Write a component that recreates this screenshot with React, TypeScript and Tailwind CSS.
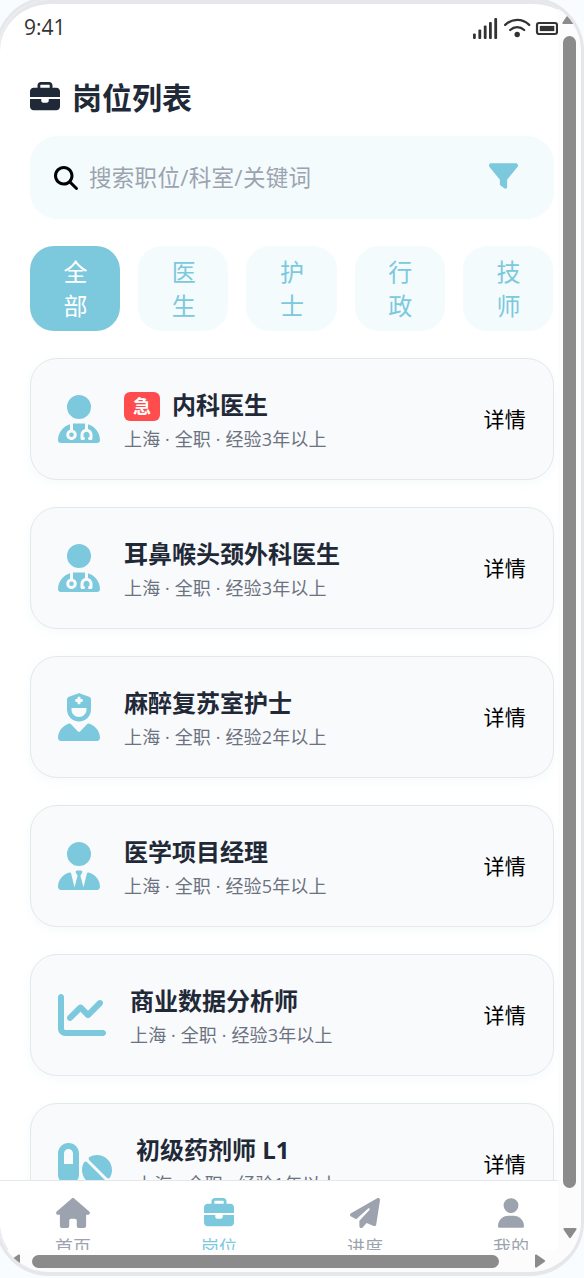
import {
  FaBriefcase,
  FaMagnifyingGlass,
  FaFilter,
  FaUserDoctor,
  FaUserNurse,
  FaUserTie,
  FaChartLine,
  FaPills,
  FaHouse,
  FaPaperPlane,
  FaUser,
} from "react-icons/fa6";
import type { IconType } from "react-icons";

type Job = { icon: IconType; width: string; title: string; years: number; urgent?: boolean };

const jobs: Job[] = [
  { icon: FaUserDoctor, width: "w-[42px]", title: "内科医生", years: 3, urgent: true },
  { icon: FaUserDoctor, width: "w-[42px]", title: "耳鼻喉头颈外科医生", years: 3 },
  { icon: FaUserNurse, width: "w-[42px]", title: "麻醉复苏室护士", years: 2 },
  { icon: FaUserTie, width: "w-[42px]", title: "医学项目经理", years: 5 },
  { icon: FaChartLine, width: "w-[48px]", title: "商业数据分析师", years: 3 },
  { icon: FaPills, width: "w-[54px]", title: "初级药剂师 L1", years: 1 },
];

const tabs = ["全部", "医生", "护士", "行政", "技师"];

const navItems: { icon: IconType; width: string; label: string; active?: boolean }[] = [
  { icon: FaHouse, width: "w-[34px]", label: "首页" },
  { icon: FaBriefcase, width: "w-[30px]", label: "岗位", active: true },
  { icon: FaPaperPlane, width: "w-[30px]", label: "进度" },
  { icon: FaUser, width: "w-[26px]", label: "我的" },
];

function StatusBar() {
  return (
    <div className="flex h-[48px] w-[558px] shrink-0 items-center justify-between pl-[24px] text-[#333]">
      <span className="-mt-[2px] text-[21px] leading-[31px]">9:41</span>
      <div className="flex items-center">
        <svg className="h-[24px] w-[28px]" viewBox="0 0 28 24" fill="currentColor">
          <rect x="1" y="17.5" width="2.8" height="5.5" rx="1" />
          <rect x="6.4" y="13.500" width="2.8" height="9.5" rx="1" />
          <rect x="11.8" y="9.500" width="2.8" height="13.5" rx="1" />
          <rect x="17" y="6" width="2.8" height="17" rx="1" />
          <rect x="22.300" y="2" width="2.800" height="21" rx="1" />
        </svg>
        <svg className="ml-[3px] h-[24px] w-[28px]" viewBox="0 0 28 24" fill="none" stroke="currentColor" strokeWidth="2.3" strokeLinecap="round">
          <path d="M2.200 8.900C9.200 2.300 19.200 2.300 26.200 8.900" />
          <path d="M7.200 14C11.200 10.200 17.200 10.200 21.200 14" />
          <circle cx="14.200" cy="18.500" r="2.700" fill="currentColor" stroke="none" />
        </svg>
        <svg className="ml-[4px] h-[24px] w-[23px]" viewBox="0 0 23 24" fill="none">
          <rect x="2" y="7" width="20" height="11" rx="2" stroke="currentColor" strokeWidth="2.2" />
          <rect x="4.800" y="9.900" width="14.500" height="5.200" fill="currentColor" />
        </svg>
      </div>
    </div>
  );
}

function JobCard({ icon: Icon, width, title, years, urgent }: Job) {
  return (
    <div className="flex h-[122px] shrink-0 items-center rounded-[27px] border border-[#e5e7eb] bg-[#f9fafc] px-[27px] shadow-[0_3px_12px_rgba(124,200,221,0.08)]">
      <Icon className={`${width} h-[48px] shrink-0 text-[#7cc8dd]`} />
      <div className="ml-[24px] grow pt-[2px]">
        <div className="flex items-center">
          {urgent && (
            <span className="mt-[2px] mr-[12px] flex h-[29px] w-[36px] items-center justify-center rounded-[6px] bg-[#ff4d4f] text-[18px] font-bold text-white">
              急
            </span>
          )}
          <span className="text-[24px] leading-[36px] font-bold text-[#1f2937]">{title}</span>
        </div>
        <div className="mt-[3px] text-[18px] leading-[27px] tracking-[0.13px] text-[#6b7280]">
          上海 · 全职 · 经验{years}年以上
        </div>
      </div>
      <span className="pt-[2px] text-[21px] tracking-[0.3px] text-black">详情</span>
    </div>
  );
}

export default function App() {
  return (
    <div className="h-[1278px] w-[584px] overflow-hidden bg-[#f9fcfe] font-['Open_Sans','Noto_Sans_CJK_SC',sans-serif]">
      <div className="-mt-[3px] -ml-[5px] h-[1279px] w-[589px] overflow-hidden rounded-[54px] border-[3px] border-b-[4px] border-[#e5e7eb] bg-[#fcfcfc] pl-[2px]">
        <div className="flex h-[1250px]">
          <div className="w-[558px] shrink-0 overflow-hidden bg-[#ebecef]">
            <div className="flex h-[1272px] w-[584px] flex-col overflow-hidden rounded-[51px] border-t-[4px] border-[#e5e7eb] bg-white">
              <StatusBar />
              <div className="flex grow basis-0 flex-col overflow-hidden pr-[30px] pl-[30px]">
                <h1 className="mt-[22px] flex h-[45px] shrink-0 items-center text-[30px] font-bold text-[#1f2937]">
                  <FaBriefcase className="mr-[12px] h-[30px] w-[30px]" />
                  <span className="pt-[2px]">岗位列表</span>
                </h1>
                <div className="mt-[17px] flex h-[83px] shrink-0 items-center rounded-[27px] bg-[#f3fbfd] pr-[36px] pl-[24px]">
                  <FaMagnifyingGlass className="h-[24px] w-[24px] text-black" />
                  <span className="ml-[11px] grow pt-[1px] text-[22.5px] tracking-[0.3px] text-[#9ca3af]">
                    搜索职位/科室/关键词
                  </span>
                  <FaFilter className="mb-[3px] h-[30px] w-[29px] text-[#7cc8dd]" />
                </div>
                <div className="mt-[27px] mr-[1px] flex shrink-0 gap-[18px]">
                  {tabs.map((tab, i) => (
                    <div
                      key={tab}
                      className={`flex h-[85px] flex-1 items-center justify-center rounded-[24px] pl-[1px] ${
                        i === 0 ? "bg-[#7cc8dd] text-white" : "bg-[#f3fbfd] text-[#7cc8dd]"
                      }`}
                    >
                      <span className="w-[24px] text-[24px] leading-[34px] break-all">{tab}</span>
                    </div>
                  ))}
                </div>
                <div className="mt-[27px] flex flex-col gap-[27px]">
                  {jobs.map((job) => (
                    <JobCard key={job.title} {...job} />
                  ))}
                </div>
              </div>
              <nav className="flex h-[92px] w-[584px] shrink-0 border-t border-[#e5e7eb] bg-white pt-[17px]">
                {navItems.map(({ icon: Icon, width, label, active }) => (
                  <div
                    key={label}
                    className={`flex w-[146px] flex-col items-center ${active ? "text-[#7cc8dd]" : "text-[#9ca3af]"}`}
                  >
                    <Icon className={`${width} h-[30px] shrink-0`} />
                    <span className="mt-[6px] text-[18px] leading-[27px]">{label}</span>
                  </div>
                ))}
              </nav>
            </div>
          </div>
          <div className="flex w-[23px] flex-col items-center">
            <svg className="mt-[13px] mr-[1px] h-[12px] w-[16px] shrink-0" viewBox="0 0 16 12">
              <path d="M7 1.500Q8 0 9 1.500L14.500 9.500Q15 11 13.500 11H2.500Q1 11 1.500 9.500Z" fill="#8b8b8b" />
            </svg>
            <div className="mt-[11px] h-[1152px] w-[13px] shrink-0 rounded-full bg-[#8b8b8b]" />
            <svg className="mt-[39px] h-[12px] w-[16px] shrink-0" viewBox="0 0 16 12">
              <path d="M7 10.500Q8 12 9 10.500L14.500 2.500Q15 1 13.500 1H2.500Q1 1 1.500 2.500Z" fill="#8b8b8b" />
            </svg>
          </div>
        </div>
        <div className="flex h-[22px] items-center pl-[9px]">
          <svg className="h-[16px] w-[12px]" viewBox="0 0 12 16">
            <path d="M1.500 7Q0 8 1.500 9L9.500 14.500Q11 15 11 13.500V2.500Q11 1 9.500 1.500Z" fill="#8b8b8b" />
          </svg>
          <div className="ml-[11px] h-[13px] w-[467px] rounded-full bg-[#8b8b8b]" />
          <svg className="ml-[35px] h-[16px] w-[12px]" viewBox="0 0 12 16">
            <path d="M10.500 7Q12 8 10.500 9L2.500 14.500Q1 15 1 13.500V2.500Q1 1 2.500 1.500Z" fill="#8b8b8b" />
          </svg>
        </div>
      </div>
    </div>
  );
}
